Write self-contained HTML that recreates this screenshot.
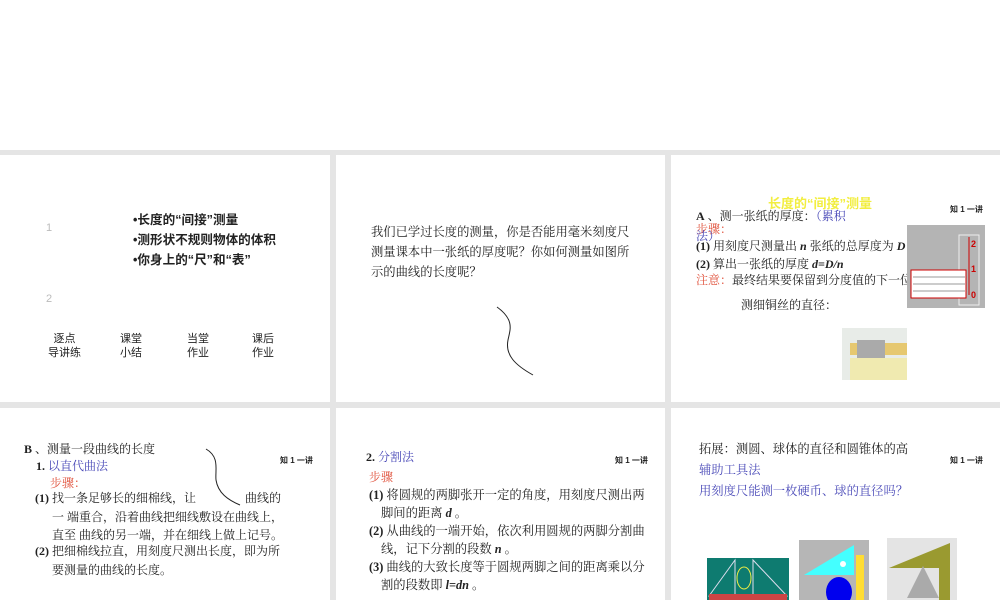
<!DOCTYPE html>
<html><head><meta charset="utf-8"><style>
*{margin:0;padding:0}
body{width:1000px;height:600px;background:#fff;position:relative;overflow:hidden;font-family:"Liberation Serif","Noto Serif CJK SC",serif;font-size:12px;color:#222}
.gray{position:absolute;left:0;top:150px;width:1000px;height:450px;background:#e5e5e5}
.p{position:absolute;background:#fff}
.t{position:absolute;white-space:nowrap;line-height:1}
.s{font-family:"Liberation Sans","Noto Sans CJK SC",sans-serif}
.b{color:#4a4ab8}.r{color:#e0503a}
.k{font-size:8px;font-weight:bold;font-family:"Liberation Sans","Noto Sans CJK SC",sans-serif}
</style></head><body>
<div class="gray"></div>
<div class="p" style="left:0;top:155px;width:330px;height:247px"></div>
<div class="p" style="left:336px;top:155px;width:329px;height:247px"></div>
<div class="p" style="left:671px;top:155px;width:329px;height:247px"></div>
<div class="p" style="left:0;top:408px;width:330px;height:192px"></div>
<div class="p" style="left:336px;top:408px;width:329px;height:192px"></div>
<div class="p" style="left:671px;top:408px;width:329px;height:192px"></div>

<!-- panel 1 -->
<div class="t s" style="left:46px;top:223px;color:#bbb;font-size:11px">1</div>
<div class="t s" style="left:46px;top:294px;color:#bbb;font-size:11px">2</div>
<div class="t s" style="left:133px;top:214px;font-weight:bold;font-size:12.6px">•长度的“间接”测量</div>
<div class="t s" style="left:133px;top:234px;font-weight:bold;font-size:12.6px">•测形状不规则物体的体积</div>
<div class="t s" style="left:133px;top:254px;font-weight:bold;font-size:12.6px">•你身上的“尺”和“表”</div>
<div class="t s" style="left:48px;top:332px;font-size:11px;line-height:14px;text-align:center">逐点<br>导讲练</div>
<div class="t s" style="left:120px;top:332px;font-size:11px;line-height:14px;text-align:center">课堂<br>小结</div>
<div class="t s" style="left:187px;top:332px;font-size:11px;line-height:14px;text-align:center">当堂<br>作业</div>
<div class="t s" style="left:252px;top:332px;font-size:11px;line-height:14px;text-align:center">课后<br>作业</div>

<!-- panel 2 -->
<div class="t" style="left:371px;top:222px;line-height:20px;font-size:12.3px">我们已学过长度的测量，你是否能用毫米刻度尺<br>测量课本中一张纸的厚度呢？你如何测量如图所<br>示的曲线的长度呢？</div>
<svg style="position:absolute;left:490px;top:305px" width="50" height="75"><path d="M7 2 C25 15,20 25,18 35 C15 50,25 60,43 70" stroke="#222" fill="none" stroke-width="1"/></svg>

<!-- panel 3 -->
<div class="t s" style="left:768px;top:197px;color:#f2ee40;font-weight:bold;font-size:13px">长度的“间接”测量</div>
<div class="t k" style="left:950px;top:206px">知 1 一讲</div>
<div class="t" style="left:696px;top:210px"><b>A</b> 、测一张纸的厚度：<span class="b">（累积</span></div>
<div class="t r" style="left:696px;top:223px">步骤：</div>
<div class="t b" style="left:696px;top:230px">法）</div>
<div class="t" style="left:696px;top:240px"><b>(1)</b> 用刻度尺测量出 <b><i>n</i></b> 张纸的总厚度为 <b><i>D</i></b></div>
<div class="t" style="left:696px;top:258px"><b>(2)</b> 算出一张纸的厚度 <b><i>d=D/n</i></b></div>
<div class="t" style="left:696px;top:274px"><span class="r">注意：</span>最终结果要保留到分度值的下一位</div>
<div class="t" style="left:741px;top:299px">测细铜丝的直径：</div>
<svg style="position:absolute;left:907px;top:225px" width="78" height="83">
<rect width="78" height="83" fill="#b4b4b4"/>
<rect x="52" y="10" width="20" height="70" fill="none" stroke="#eee" stroke-width="1"/>
<path d="M4 45 h55 v28 h-55 z" fill="#fff" stroke="#c00"/>
<g stroke="#999"><line x1="6" y1="52" x2="58" y2="52"/><line x1="6" y1="59" x2="58" y2="59"/><line x1="6" y1="66" x2="58" y2="66"/></g>
<g stroke="#c00"><line x1="62" y1="12" x2="62" y2="70"/></g>
<g fill="#c00" font-size="9" font-family="Liberation Sans" font-weight="bold"><text x="64" y="22">2</text><text x="64" y="47">1</text><text x="64" y="73">0</text></g>
</svg>
<svg style="position:absolute;left:842px;top:328px" width="65" height="52">
<rect width="65" height="52" fill="#e8ece8"/>
<rect x="8" y="15" width="58" height="12" fill="#e6c870"/>
<rect x="15" y="12" width="28" height="18" fill="#aaa"/>
<rect x="8" y="30" width="57" height="22" fill="#f0eab0"/>
</svg>

<!-- panel 4 -->
<div class="t" style="left:24px;top:443px"><b>B</b> 、测量一段曲线的长度</div>
<div class="t k" style="left:280px;top:457px">知 1 一讲</div>
<div class="t" style="left:36px;top:460px"><b>1.</b> <span class="b">以直代曲法</span></div>
<div class="t r" style="left:50px;top:477px">步骤：</div>
<div class="t" style="left:35px;top:492px"><b>(1)</b> 找一条足够长的细棉线，让</div>
<div class="t" style="left:245px;top:492px">曲线的</div>
<div class="t" style="left:52px;top:511px">一 端重合，沿着曲线把细线敷设在曲线上，</div>
<div class="t" style="left:52px;top:529px">直至 曲线的另一端，并在细线上做上记号。</div>
<div class="t" style="left:35px;top:545px"><b>(2)</b> 把细棉线拉直，用刻度尺测出长度，即为所</div>
<div class="t" style="left:52px;top:564px">要测量的曲线的长度。</div>
<svg style="position:absolute;left:200px;top:445px" width="50" height="62"><path d="M6 4 C20 12,15 25,16 35 C18 48,28 55,40 60" stroke="#222" fill="none"/></svg>

<!-- panel 5 -->
<div class="t" style="left:366px;top:451px"><b>2.</b> <span class="b">分割法</span></div>
<div class="t k" style="left:615px;top:457px">知 1 一讲</div>
<div class="t r" style="left:369px;top:471px">步骤</div>
<div class="t" style="left:369px;top:489px;font-size:12.3px"><b>(1)</b> 将圆规的两脚张开一定的角度，用刻度尺测出两</div>
<div class="t" style="left:381px;top:507px;font-size:12.3px">脚间的距离 <b><i>d</i></b> 。</div>
<div class="t" style="left:369px;top:525px;font-size:12.3px"><b>(2)</b> 从曲线的一端开始，依次利用圆规的两脚分割曲</div>
<div class="t" style="left:381px;top:543px;font-size:12.3px">线，记下分割的段数 <b><i>n</i></b> 。</div>
<div class="t" style="left:369px;top:561px;font-size:12.3px"><b>(3)</b> 曲线的大致长度等于圆规两脚之间的距离乘以分</div>
<div class="t" style="left:381px;top:579px;font-size:12.3px">割的段数即 <b><i>l=dn</i></b> 。</div>

<!-- panel 6 -->
<div class="t" style="left:699px;top:443px;font-size:12.3px">拓展：测圆、球体的直径和圆锥体的高</div>
<div class="t k" style="left:950px;top:457px">知 1 一讲</div>
<div class="t b" style="left:699px;top:464px;font-size:12.3px">辅助工具法</div>
<div class="t b" style="left:699px;top:485px;font-size:12.3px">用刻度尺能测一枚硬币、球的直径吗？</div>
<svg style="position:absolute;left:707px;top:558px" width="82" height="42">
<rect width="82" height="42" fill="#0e7b70"/>
<path d="M2 38 L28 2 L28 38 Z M46 2 L80 38 L46 38 Z" fill="none" stroke="#dde"/>
<ellipse cx="37" cy="20" rx="7" ry="11" fill="none" stroke="#ee4"/>
<rect x="2" y="36" width="78" height="6" fill="#c44"/>
</svg>
<svg style="position:absolute;left:799px;top:540px" width="70" height="60">
<rect width="70" height="60" fill="#b6b6b6"/>
<path d="M5 35 L55 5 L55 35 Z" fill="#4ff"/>
<circle cx="44" cy="24" r="3" fill="#fff"/>
<ellipse cx="40" cy="52" rx="13" ry="15" fill="#00e"/>
<rect x="57" y="15" width="8" height="45" fill="#fd3"/>
</svg>
<svg style="position:absolute;left:887px;top:538px" width="70" height="62">
<rect width="70" height="62" fill="#e4e4e4"/>
<path d="M2 30 L63 5 L63 62 L52 62 L52 30 Z" fill="#9a9a30"/>
<path d="M36 28 L20 60 L52 60 Z" fill="#aaa"/>
</svg>
</body></html>
